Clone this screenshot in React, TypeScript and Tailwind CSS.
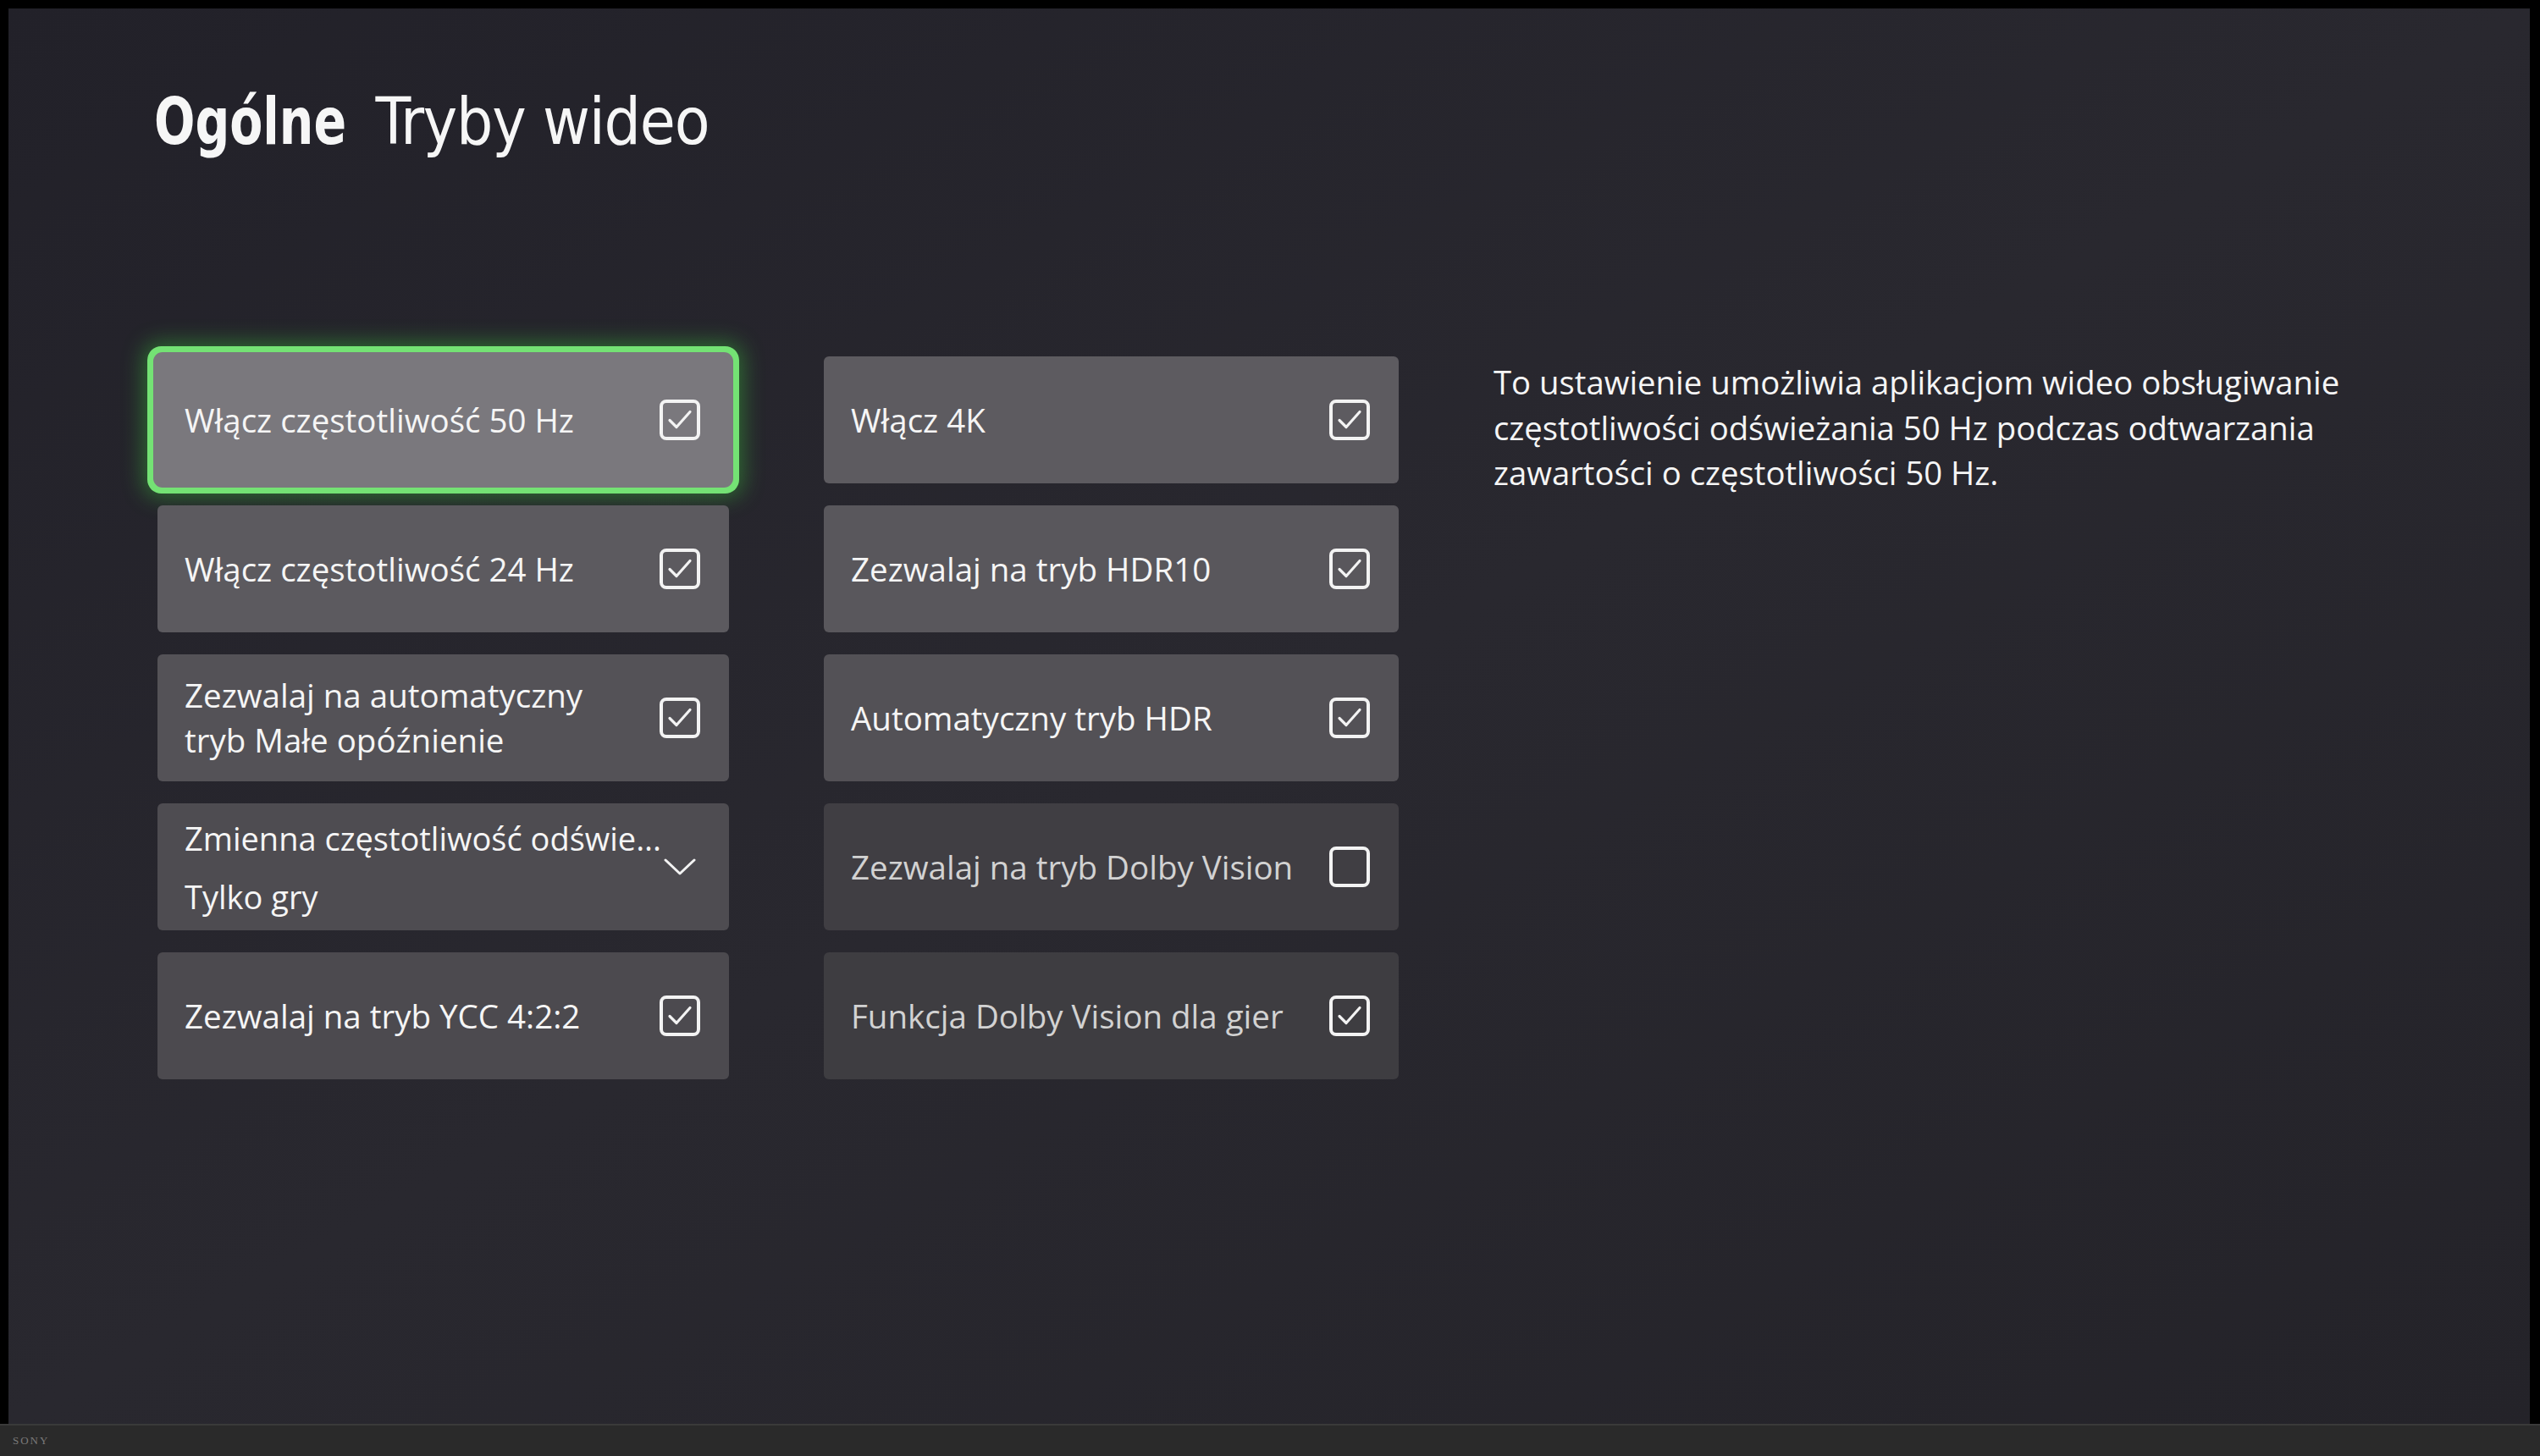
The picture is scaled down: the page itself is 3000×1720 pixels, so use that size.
import React from "react";

type Item = {
  label: string[];
  kind: "check" | "empty" | "dropdown";
  value?: string;
  bg: string;
  dim?: boolean;
  focused?: boolean;
};

const left: Item[] = [
  { label: ["Włącz częstotliwość 50 Hz"], kind: "check", bg: "bg-[#7a787d]", focused: true },
  { label: ["Włącz częstotliwość 24 Hz"], kind: "check", bg: "bg-[#5c5a5f]" },
  { label: ["Zezwalaj na automatyczny", "tryb Małe opóźnienie"], kind: "check", bg: "bg-[#545257]" },
  { label: ["Zmienna częstotliwość odświe..."], kind: "dropdown", value: "Tylko gry", bg: "bg-[#4e4c51]" },
  { label: ["Zezwalaj na tryb YCC 4:2:2"], kind: "check", bg: "bg-[#4c4a4f]" },
];

const right: Item[] = [
  { label: ["Włącz 4K"], kind: "check", bg: "bg-[#5d5b60]" },
  { label: ["Zezwalaj na tryb HDR10"], kind: "check", bg: "bg-[#59575c]" },
  { label: ["Automatyczny tryb HDR"], kind: "check", bg: "bg-[#535156]" },
  { label: ["Zezwalaj na tryb Dolby Vision"], kind: "empty", bg: "bg-[#403e43]", dim: true },
  { label: ["Funkcja Dolby Vision dla gier"], kind: "check", bg: "bg-[#3e3d41]", dim: true },
];

function CheckBox({ checked }: { checked: boolean }) {
  return (
    <svg width="48" height="48" viewBox="0 0 48 48" className="shrink-0">
      <rect x="2" y="2" width="44" height="44" rx="6" fill="none" stroke="#f3f3f3" strokeWidth="4" />
      {checked && (
        <path d="M12 24.5 L20 32.5 L36 14.5" fill="none" stroke="#f3f3f3" strokeWidth="3.2" strokeLinecap="round" strokeLinejoin="round" />
      )}
    </svg>
  );
}

function Chevron() {
  return (
    <svg width="38" height="22" viewBox="0 0 38 22" className="shrink-0">
      <path d="M2 3 L19 19 L36 3" fill="none" stroke="#f3f3f3" strokeWidth="3" strokeLinecap="round" strokeLinejoin="round" />
    </svg>
  );
}

function Card({ item }: { item: Item }) {
  const text = item.dim ? "text-[#d2d2d2]" : "text-[#f5f5f5] font-medium";
  return (
    <div
      className={
        "h-[150px] rounded-[6px] flex items-center justify-between pl-[32px] " +
        (item.kind === "dropdown" ? "pr-[39px] " : "pr-[34px] ") +
        item.bg +
        (item.focused
          ? " shadow-[0_0_0_5px_#7a787d,0_0_0_12px_#74e274,0_0_26px_16px_rgba(60,200,60,0.45)]"
          : "")
      }
    >
      {item.kind === "dropdown" ? (
        <div className={"flex flex-col gap-[23px] whitespace-nowrap text-[38px] leading-[46px] " + text}>
          <span>{item.label[0]}</span>
          <span>{item.value}</span>
        </div>
      ) : (
        <div className={"flex flex-col whitespace-nowrap text-[38.5px] leading-[53px] " + text}>
          {item.label.map((l) => (
            <span key={l}>{l}</span>
          ))}
        </div>
      )}
      {item.kind === "dropdown" ? <Chevron /> : <CheckBox checked={item.kind === "check"} />}
    </div>
  );
}

export default function App() {
  return (
    <div className="w-[3000px] h-[1720px] bg-black flex flex-col overflow-hidden">
      {/* Screen */}
      <div
        className="flex-1 mt-[10px] ml-[10px] mr-[12px] bg-gradient-to-br from-[#222129] via-[#29282f] to-[#242329] flex flex-col"
        style={{ fontFamily: '"Open Sans", "Noto Sans", sans-serif' }}
      >
        {/* Title */}
        <div
          className="pt-[96px] pl-[172px] flex items-baseline text-[76px] leading-[76px] text-[#f6f6f6]"
          style={{ fontFamily: '"DejaVu Sans Condensed", "DejaVu Sans", sans-serif' }}
        >
          <span className="inline-block font-bold origin-left scale-x-[0.833] mr-[-11px]">Ogólne</span>
          <span className="tracking-[-1.2px]">Tryby wideo</span>
        </div>

        {/* Main grid */}
        <div className="mt-[239px] pl-[176px] flex items-start gap-[112px]">
          <div className="w-[675px] flex flex-col gap-[26px]">
            {left.map((it) => (
              <Card key={it.label[0]} item={it} />
            ))}
          </div>
          <div className="w-[679px] flex flex-col gap-[26px]">
            {right.map((it) => (
              <Card key={it.label[0]} item={it} />
            ))}
          </div>
          <p className="mt-[4px] whitespace-nowrap text-[38.3px] leading-[53.5px] text-[#f5f5f5] font-medium">
            To ustawienie umożliwia aplikacjom wideo obsługiwanie
            <br />
            częstotliwości odświeżania 50 Hz podczas odtwarzania
            <br />
            zawartości o częstotliwości 50 Hz.
          </p>
        </div>
      </div>

      {/* TV bezel */}
      <div className="h-[38px] bg-[#2a2a2a] border-t-[2px] border-[#3a3a3a] flex items-start pt-[8px] pl-[15px]">
        <span className="text-[13px] tracking-[2px] text-[#7a7a7a]" style={{ fontFamily: '"Liberation Serif", serif' }}>
          SONY
        </span>
      </div>
    </div>
  );
}
